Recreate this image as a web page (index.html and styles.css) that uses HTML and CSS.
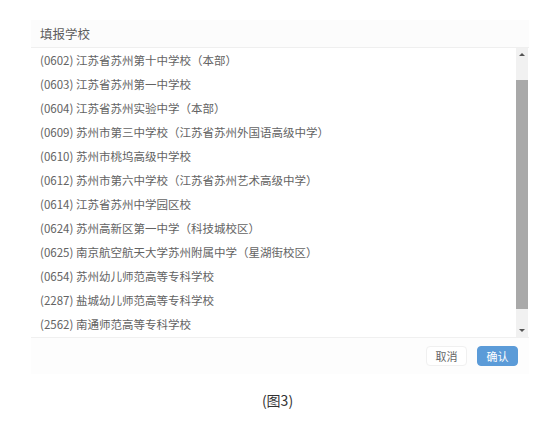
FILE: index.html
```html
<!DOCTYPE html>
<html lang="zh-CN">
<head>
  <meta charset="UTF-8" />
  <title>填报学校</title>
  <link rel="stylesheet" href="styles.css">
</head>
<body>

<div class="dialog">
  <div class="dialog-header">填报学校</div>

  <div class="dialog-body">
    <ul class="school-list">
      <li>(0602) 江苏省苏州第十中学校（本部）</li>
      <li>(0603) 江苏省苏州第一中学校</li>
      <li>(0604) 江苏省苏州实验中学（本部）</li>
      <li>(0609) 苏州市第三中学校（江苏省苏州外国语高级中学）</li>
      <li>(0610) 苏州市桃坞高级中学校</li>
      <li>(0612) 苏州市第六中学校（江苏省苏州艺术高级中学）</li>
      <li>(0614) 江苏省苏州中学园区校</li>
      <li>(0624) 苏州高新区第一中学（科技城校区）</li>
      <li>(0625) 南京航空航天大学苏州附属中学（星湖街校区）</li>
      <li>(0654) 苏州幼儿师范高等专科学校</li>
      <li>(2287) 盐城幼儿师范高等专科学校</li>
      <li>(2562) 南通师范高等专科学校</li>
    </ul>
    <div class="scrollbar">
      <span class="arrow up"></span>
      <div class="track"><div class="thumb"></div></div>
      <span class="arrow down"></span>
    </div>
  </div>

  <div class="dialog-footer">
    <button class="btn">取消</button>
    <button class="btn primary">确认</button>
  </div>
</div>

<p class="caption">(图3)</p>

</body>
</html>
```

FILE: styles.css
```css
* { box-sizing: border-box; }

body {
  margin: 0;
  background: #fff;
  font-family: "Noto Sans CJK SC", "Noto Sans", sans-serif;
  color: #555;
}

.dialog {
  width: 498px;
  margin: 20px 0 0 31px;
  background: #fff;
}

.dialog-header {
  height: 28px;
  line-height: 27px;
  padding-left: 9px;
  font-size: 12.5px;
  color: #5c5c5c;
  background: #fcfcfc;
  border-bottom: 1px solid #efefef;
}

.dialog-body {
  display: flex;
  height: 290px;
  border-bottom: 1px solid #f0f0f0;
}

.school-list {
  flex: 1;
  list-style: none;
  margin: 0;
  padding: 0 0 0 9px;
}

.school-list li {
  height: 24px;
  line-height: 24px;
  font-size: 11.5px;
  color: #636363;
  white-space: nowrap;
}

.scrollbar {
  width: 12px;
  margin-right: 1px;
  background: #f1f1f1;
  display: flex;
  flex-direction: column;
  align-items: center;
}

.arrow {
  width: 0;
  height: 0;
  border-left: 3px solid transparent;
  border-right: 3px solid transparent;
}

.arrow.up {
  margin-top: 5px;
  border-bottom: 3px solid #555;
}

.arrow.down {
  margin-bottom: 5px;
  border-top: 3px solid #555;
}

.track {
  flex: 1;
  width: 100%;
  padding: 24px 0 20px;
}

.thumb {
  width: 100%;
  height: 100%;
  background: #a9a9a9;
}

.dialog-footer {
  display: flex;
  justify-content: flex-end;
  gap: 10px;
  padding: 8px 11px 8px 0;
  background: #fdfdfd;
}

.btn {
  width: 41px;
  height: 20px;
  padding: 0;
  font-family: inherit;
  font-size: 11px;
  color: #666;
  background: #fff;
  border: 1px solid #f0f0f0;
  border-radius: 4px;
}

.btn.primary {
  color: #fff;
  background: #5b9bd8;
  border-color: #5b9bd8;
}

.caption {
  margin: 16px 0 0;
  text-align: center;
  font-size: 14px;
  color: #333;
  padding-right: 2px;
}
```
